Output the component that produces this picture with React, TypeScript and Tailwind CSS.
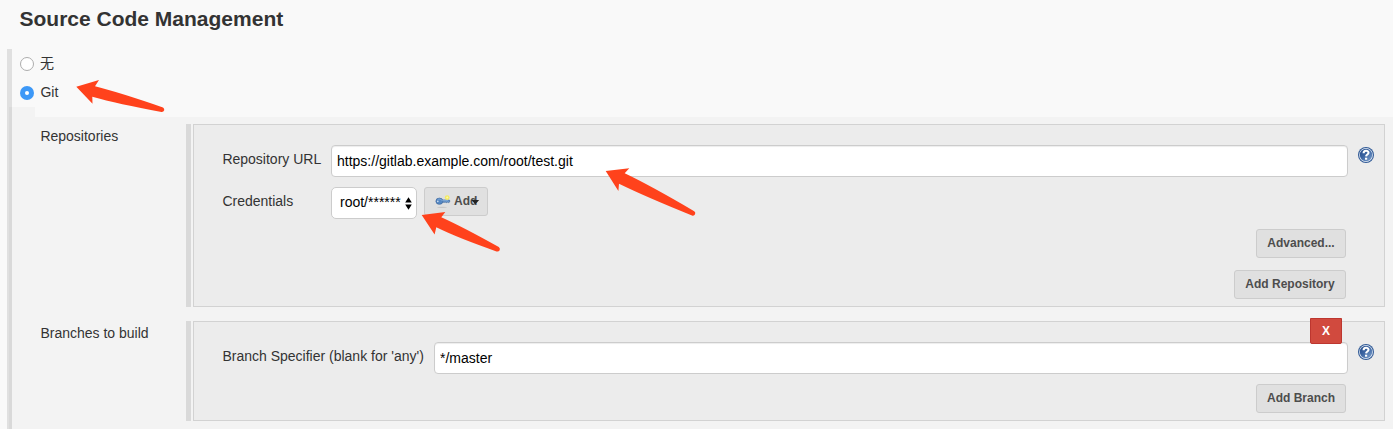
import React from "react";

function HelpIcon() {
  return (
    <svg width="16" height="16" viewBox="0 0 16 16" className="block shrink-0">
      <defs>
        <linearGradient id="help" x1="0" y1="0" x2="1" y2="1">
          <stop offset="0" stopColor="#234a88" />
          <stop offset="0.45" stopColor="#3c65a2" />
          <stop offset="1" stopColor="#7fa2ce" />
        </linearGradient>
      </defs>
      <circle cx="8" cy="8" r="8" fill="#315a96" />
      <circle cx="8" cy="8" r="6.9" fill="#e6edf6" />
      <circle cx="8" cy="8" r="6.2" fill="url(#help)" />
      <path d="M5.6 6.2C5.6 3 10.5 3.1 10.5 5.8C10.5 7.5 8.2 7.5 8.1 9.4" fill="none" stroke="#fff" strokeWidth="2.1" />
      <rect x="7" y="10.7" width="2.2" height="2" fill="#fff" />
    </svg>
  );
}

function KeyIcon() {
  return (
    <svg width="16" height="16" viewBox="0 0 16 16" className="block shrink-0">
      <ellipse cx="7" cy="14.3" rx="5" ry="0.6" fill="#c6c6c6" />
      <path d="M7.5 7h6.8l.6 1-.6 1.3-.9.3-.8-.5-.8.6-1-.5-3.3.1z" fill="#6a98ce" stroke="#41699c" strokeWidth="0.7" />
      <ellipse cx="4.4" cy="8.2" rx="3.5" ry="3.1" fill="#5588c4" stroke="#41699c" strokeWidth="0.7" />
      <circle cx="2.8" cy="8.4" r="0.8" fill="#d6e2f0" />
      <path d="M2.8 6.4c1.5-.8 3-.4 4.3 1.2H13" fill="none" stroke="#8db4e0" strokeWidth="0.7" />
      <circle cx="12.2" cy="4.6" r="2.4" fill="#f3ea62" />
      <circle cx="12.2" cy="4.6" r="1" fill="#fdf9a8" />
    </svg>
  );
}

function Button({ children, className = "" }: { children: React.ReactNode; className?: string }) {
  return (
    <button
      className={`relative flex h-[29px] shrink-0 items-center justify-center rounded-[3px] border border-[#cccccc] bg-[#e0e0e0] pb-px text-[12px] leading-[16px] font-bold text-[#4d4d4d] ${className}`}
    >
      {children}
    </button>
  );
}

function Input({ value }: { value: string }) {
  return (
    <input
      readOnly
      value={value}
      className="h-8 min-w-0 flex-1 rounded-[4px] border border-[#cccccc] bg-white px-[5px] text-[14px] text-black shadow-[inset_0_1px_1px_rgba(0,0,0,0.075)] outline-none"
    />
  );
}

function Section({ label, height, children }: { label: string; height: string; children: React.ReactNode }) {
  return (
    <div className={`flex ${height}`}>
      <div className="w-[174px] shrink-0 pt-[2px] pl-[28.4px] leading-[20px]">{label}</div>
      <div className="mr-[2px] w-[5px] shrink-0 bg-[#d9d9d9]" />
      <div className="mr-2 min-w-0 flex-1 border border-[#d2d2d2] bg-[#ececec] pl-7">{children}</div>
    </div>
  );
}

function Arrows() {
  return (
    <svg className="pointer-events-none absolute top-0 left-0" width="1393" height="429" fill="#ff421c">
      <path d="M76.3 86.7L99 80L95 86.2Q120 92.5 163 107.4Q164.6 108.3 164.2 110.2Q163.5 112.2 161.5 112Q118 104 92.3 96.8L92.5 103.8Z" />
      <path d="M605.7 171L629.3 168.3L624.7 173.3Q650 185.3 694.2 211.2Q695.8 212.4 695.1 214.3Q694 216.2 692 215.5Q646 197 619 183.8L618.4 191Z" />
      <path d="M421.7 215L445.3 212L441.3 217.3Q464 227.6 498.8 247.1Q500.4 248.3 499.7 250.2Q498.5 252 496.5 251.4Q458 238 436.3 227.3L434.6 234.4Z" />
    </svg>
  );
}

export default function App() {
  return (
    <div className="relative flex h-[429px] w-full flex-col overflow-hidden bg-[#f9f9f9] font-['Liberation_Sans','Noto_Sans_CJK_SC',sans-serif] text-[14px] text-[#333333]">
      <h1 className="h-[49px] shrink-0 pt-[6px] pl-[19.5px] text-[21px] leading-[26px] font-bold">Source Code Management</h1>
      <div className="flex min-h-0 flex-1 pl-[7px]">
        <div className="w-[5px] shrink-0 bg-[#e0e0e0] pt-[58px] pl-[2px]">
          <div className="h-full bg-[#d9d9d9]" />
        </div>
        <div className="flex min-w-0 flex-1 flex-col">
          <div className="flex h-[58px] shrink-0 flex-col pt-1 pl-2">
            <label className="flex h-[29px] items-start gap-[6px]">
              <span className="mt-[4px] size-[14px] rounded-full border border-[#adadad] bg-white" />
              <span className="leading-[20px]">无</span>
            </label>
            <label className="flex items-start gap-[6.4px]">
              <span className="mt-[4px] flex size-[14px] items-center justify-center rounded-full bg-[#3d98f7]">
                <span className="size-[4px] rounded-full bg-white" />
              </span>
              <span className="leading-[20px]">Git</span>
            </label>
          </div>
          <div className="h-[10px] w-[23px] shrink-0 bg-[#f3f3f3]" />
          <div className="flex min-h-0 flex-1 flex-col gap-[14px] bg-[#f3f3f3] pt-[7px]">
            <Section label="Repositories" height="h-[183px]">
              <div className="flex pt-5 pr-[10px]">
                <span className="w-[109px] shrink-0 pt-[4px] pl-[0.4px] leading-[20px]">Repository URL</span>
                <Input value="https://gitlab.example.com/root/test.git" />
                <div className="ml-[10px] pt-[2px]"><HelpIcon /></div>
              </div>
              <div className="flex pt-[10px]">
                <span className="w-[109px] shrink-0 pt-[4px] pl-[0.4px] leading-[20px]">Credentials</span>
                <div className="flex h-8 w-[86px] items-center rounded-[5px] border border-[#cccccc] bg-white pl-2 text-black">
                  <span className="w-[65px] pb-[2px] leading-[20px]">root/******</span>
                  <svg width="7" height="13" viewBox="0 0 7 13" className="shrink-0">
                    <path d="M3.5 0.2L6.8 5.4H0.2ZM3.5 12.8L6.8 7.6H0.2Z" fill="#000" />
                  </svg>
                </div>
                <Button className="ml-[7px] w-16">
                  <span className="flex w-full items-center gap-[3px] pl-[10px]">
                    <KeyIcon />
                    Add
                  </span>
                  <svg width="9" height="6" viewBox="0 0 9 6" className="absolute top-[11px] left-[46px]">
                    <path d="M0.3 1H8.2L4.3 5.2Z" fill="#222" />
                  </svg>
                </Button>
              </div>
              <div className="flex flex-col items-end gap-3 pt-[10px] pr-[38px]">
                <Button className="w-[90px]">Advanced...</Button>
                <Button className="w-28">Add Repository</Button>
              </div>
            </Section>
            <Section label="Branches to build" height="h-[100px]">
              <div className="relative flex pt-5 pr-[10px]">
                <span className="w-[212px] shrink-0 pt-[4px] pl-[0.4px] leading-[20px]">Branch Specifier (blank for 'any')</span>
                <Input value="*/master" />
                <div className="ml-[10px] pt-[2px]"><HelpIcon /></div>
                <button className="absolute -top-1 right-[42px] h-[26px] w-8 rounded-b-[2px] border border-[#bd362f] bg-[#d14a3e] text-[12px] leading-[24px] font-bold text-white">
                  X
                </button>
              </div>
              <div className="flex justify-end pt-[10px] pr-[38px]">
                <Button className="w-[90px]">Add Branch</Button>
              </div>
            </Section>
          </div>
        </div>
      </div>
      <Arrows />
    </div>
  );
}
